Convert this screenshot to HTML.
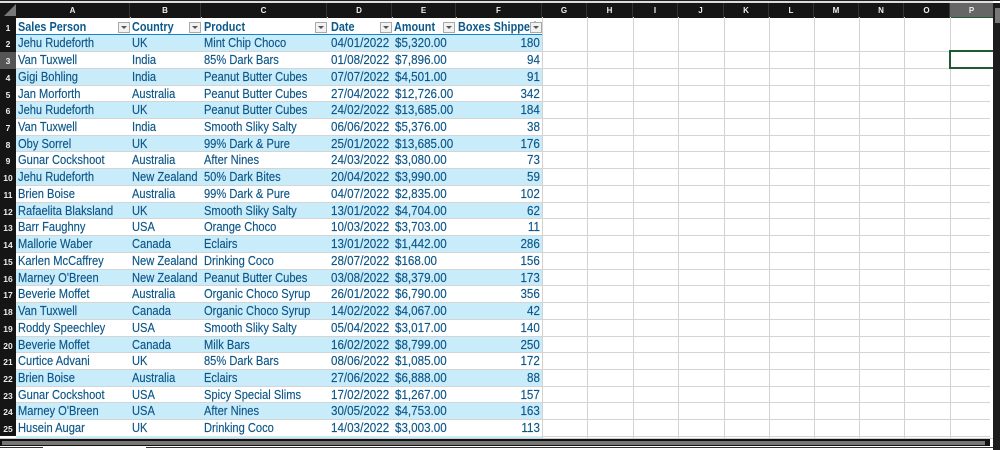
<!DOCTYPE html>
<html><head><meta charset="utf-8"><style>
html,body{margin:0;padding:0;background:#fff}
#p{position:relative;width:1000px;height:450px;overflow:hidden;background:#fff;font-family:"Liberation Sans",sans-serif}
.abs{position:absolute}
#top{left:0;top:0;width:1000px;height:1px;background:#222}
#top2{left:0;top:1px;width:993px;height:2px;background:#ddd}
#ch{left:0;top:3px;width:993px;height:14.5px;background:#151515}
.c{position:absolute;top:3px;height:14.5px;line-height:15px;color:#eee;font-size:8px;font-weight:bold;text-align:center;border-right:1px solid #333;box-sizing:border-box}
#rh{left:0;top:17px;width:16px;height:419px;background:#151515}
.n{height:16.74px;line-height:18px;text-align:center;color:#eee;font-size:8.5px;font-weight:bold}
.v{position:absolute;top:17px;width:1px;height:421px;background:#d2d2d2}
#g{left:16px;top:18.6px;width:974px}
.r{position:relative;height:16.74px;box-sizing:border-box;border-bottom:1px solid #d4d4d4}
.r span{position:absolute;top:0;line-height:16.5px;font-size:12.5px;color:#0c5688;white-space:nowrap;transform:scaleX(.89);transform-origin:0 50%;-webkit-text-stroke:.15px #0c5688}
.t{background:linear-gradient(#fff,#fff) 0 0/526px 100% no-repeat}
.b{background:linear-gradient(#c9ecfb,#c9ecfb) 0 0/526px 100% no-repeat}
.a{left:2px}.o{left:116px}.m{left:188px}
.r .d{left:315px;transform:scaleX(.93)}.r .e{left:379px;transform:scaleX(.93)}.r .f{right:450px;transform:scaleX(.93);transform-origin:100% 50%}
.h span{font-weight:bold;transform:scaleX(.87);color:#0b5a8c;-webkit-text-stroke:0}
.fb{position:absolute;top:22px;width:12px;height:11px;box-sizing:border-box;background:#f2f2f2;border:1px solid #a9a9a9}
.fb:after{content:"";position:absolute;left:2px;top:3px;border-left:3px solid transparent;border-right:3px solid transparent;border-top:3.5px solid #555}
</style></head><body><div id="p">
<div class="abs" id="top"></div><div class="abs" id="top2"></div><div class="abs" id="ch"></div>
<svg class="abs" style="left:3px;top:4px" width="13" height="13"><polygon points="13,0 13,12 1,12" fill="#777"/></svg>
<div class="c" style="left:16px;width:114px">A</div><div class="c" style="left:130px;width:71px">B</div><div class="c" style="left:201px;width:126px">C</div><div class="c" style="left:327px;width:65px">D</div><div class="c" style="left:392px;width:64px">E</div><div class="c" style="left:456px;width:86px">F</div><div class="c" style="left:542px;width:45px">G</div><div class="c" style="left:587px;width:46px">H</div><div class="c" style="left:633px;width:45px">I</div><div class="c" style="left:678px;width:46px">J</div><div class="c" style="left:724px;width:45px">K</div><div class="c" style="left:769px;width:45px">L</div><div class="c" style="left:814px;width:45px">M</div><div class="c" style="left:859px;width:45px">N</div><div class="c" style="left:904px;width:46px">O</div><div class="c" style="left:950px;width:43px;background:#666;border-bottom:1px solid #1d5c32;border-right:0">P</div>
<div class="abs" id="rh"><div class="n" style="margin-top:1.6px">1</div><div class="n">2</div><div class="n" style="background:#555">3</div><div class="n">4</div><div class="n">5</div><div class="n">6</div><div class="n">7</div><div class="n">8</div><div class="n">9</div><div class="n">10</div><div class="n">11</div><div class="n">12</div><div class="n">13</div><div class="n">14</div><div class="n">15</div><div class="n">16</div><div class="n">17</div><div class="n">18</div><div class="n">19</div><div class="n">20</div><div class="n">21</div><div class="n">22</div><div class="n">23</div><div class="n">24</div><div class="n">25</div></div>
<i class="v" style="left:130px"></i><i class="v" style="left:201px"></i><i class="v" style="left:327px"></i><i class="v" style="left:392px"></i><i class="v" style="left:456px"></i><i class="v" style="left:542px"></i><i class="v" style="left:587px"></i><i class="v" style="left:633px"></i><i class="v" style="left:678px"></i><i class="v" style="left:724px"></i><i class="v" style="left:769px"></i><i class="v" style="left:814px"></i><i class="v" style="left:859px"></i><i class="v" style="left:904px"></i><i class="v" style="left:950px"></i>
<div class="abs" id="g">
<div class="r h t" style="border-bottom:0;background-size:526px 100%"><span class="a">Sales Person</span><span class="o">Country</span><span class="m">Product</span><span style="left:315px">Date</span><span style="left:378px">Amount</span><span style="left:442px">Boxes Shipped</span></div>
<div class="r b"><span class="a">Jehu Rudeforth</span><span class="o">UK</span><span class="m">Mint Chip Choco</span><span class="d">04/01/2022</span><span class="e">$5,320.00</span><span class="f">180</span></div>
<div class="r t"><span class="a">Van Tuxwell</span><span class="o">India</span><span class="m">85% Dark Bars</span><span class="d">01/08/2022</span><span class="e">$7,896.00</span><span class="f">94</span></div>
<div class="r b"><span class="a">Gigi Bohling</span><span class="o">India</span><span class="m">Peanut Butter Cubes</span><span class="d">07/07/2022</span><span class="e">$4,501.00</span><span class="f">91</span></div>
<div class="r t"><span class="a">Jan Morforth</span><span class="o">Australia</span><span class="m">Peanut Butter Cubes</span><span class="d">27/04/2022</span><span class="e">$12,726.00</span><span class="f">342</span></div>
<div class="r b"><span class="a">Jehu Rudeforth</span><span class="o">UK</span><span class="m">Peanut Butter Cubes</span><span class="d">24/02/2022</span><span class="e">$13,685.00</span><span class="f">184</span></div>
<div class="r t"><span class="a">Van Tuxwell</span><span class="o">India</span><span class="m">Smooth Sliky Salty</span><span class="d">06/06/2022</span><span class="e">$5,376.00</span><span class="f">38</span></div>
<div class="r b"><span class="a">Oby Sorrel</span><span class="o">UK</span><span class="m">99% Dark &amp; Pure</span><span class="d">25/01/2022</span><span class="e">$13,685.00</span><span class="f">176</span></div>
<div class="r t"><span class="a">Gunar Cockshoot</span><span class="o">Australia</span><span class="m">After Nines</span><span class="d">24/03/2022</span><span class="e">$3,080.00</span><span class="f">73</span></div>
<div class="r b"><span class="a">Jehu Rudeforth</span><span class="o">New Zealand</span><span class="m">50% Dark Bites</span><span class="d">20/04/2022</span><span class="e">$3,990.00</span><span class="f">59</span></div>
<div class="r t"><span class="a">Brien Boise</span><span class="o">Australia</span><span class="m">99% Dark &amp; Pure</span><span class="d">04/07/2022</span><span class="e">$2,835.00</span><span class="f">102</span></div>
<div class="r b"><span class="a">Rafaelita Blaksland</span><span class="o">UK</span><span class="m">Smooth Sliky Salty</span><span class="d">13/01/2022</span><span class="e">$4,704.00</span><span class="f">62</span></div>
<div class="r t"><span class="a">Barr Faughny</span><span class="o">USA</span><span class="m">Orange Choco</span><span class="d">10/03/2022</span><span class="e">$3,703.00</span><span class="f">11</span></div>
<div class="r b"><span class="a">Mallorie Waber</span><span class="o">Canada</span><span class="m">Eclairs</span><span class="d">13/01/2022</span><span class="e">$1,442.00</span><span class="f">286</span></div>
<div class="r t"><span class="a">Karlen McCaffrey</span><span class="o">New Zealand</span><span class="m">Drinking Coco</span><span class="d">28/07/2022</span><span class="e">$168.00</span><span class="f">156</span></div>
<div class="r b"><span class="a">Marney O'Breen</span><span class="o">New Zealand</span><span class="m">Peanut Butter Cubes</span><span class="d">03/08/2022</span><span class="e">$8,379.00</span><span class="f">173</span></div>
<div class="r t"><span class="a">Beverie Moffet</span><span class="o">Australia</span><span class="m">Organic Choco Syrup</span><span class="d">26/01/2022</span><span class="e">$6,790.00</span><span class="f">356</span></div>
<div class="r b"><span class="a">Van Tuxwell</span><span class="o">Canada</span><span class="m">Organic Choco Syrup</span><span class="d">14/02/2022</span><span class="e">$4,067.00</span><span class="f">42</span></div>
<div class="r t"><span class="a">Roddy Speechley</span><span class="o">USA</span><span class="m">Smooth Sliky Salty</span><span class="d">05/04/2022</span><span class="e">$3,017.00</span><span class="f">140</span></div>
<div class="r b"><span class="a">Beverie Moffet</span><span class="o">Canada</span><span class="m">Milk Bars</span><span class="d">16/02/2022</span><span class="e">$8,799.00</span><span class="f">250</span></div>
<div class="r t"><span class="a">Curtice Advani</span><span class="o">UK</span><span class="m">85% Dark Bars</span><span class="d">08/06/2022</span><span class="e">$1,085.00</span><span class="f">172</span></div>
<div class="r b"><span class="a">Brien Boise</span><span class="o">Australia</span><span class="m">Eclairs</span><span class="d">27/06/2022</span><span class="e">$6,888.00</span><span class="f">88</span></div>
<div class="r t"><span class="a">Gunar Cockshoot</span><span class="o">USA</span><span class="m">Spicy Special Slims</span><span class="d">17/02/2022</span><span class="e">$1,267.00</span><span class="f">157</span></div>
<div class="r b"><span class="a">Marney O'Breen</span><span class="o">USA</span><span class="m">After Nines</span><span class="d">30/05/2022</span><span class="e">$4,753.00</span><span class="f">163</span></div>
<div class="r t"><span class="a">Husein Augar</span><span class="o">UK</span><span class="m">Drinking Coco</span><span class="d">14/03/2022</span><span class="e">$3,003.00</span><span class="f">113</span></div>
</div>
<div class="abs" style="left:16px;top:34px;width:526px;height:1px;background:#1485c8"></div>
<div class="abs" style="left:16px;top:436px;width:526px;height:2px;background:#c9ecfb"></div>
<div class="fb" style="left:118px"></div><div class="fb" style="left:189px"></div><div class="fb" style="left:315px"></div><div class="fb" style="left:380px"></div><div class="fb" style="left:443px"></div><div class="fb" style="left:530px"></div>
<div class="abs" style="left:949px;top:50px;width:44px;height:19px;box-sizing:border-box;border:2px solid #1d5c32;border-right:0"></div>
<div class="abs" style="left:0;top:438px;width:993px;height:1px;background:#ccc"></div>
<div class="abs" style="left:0;top:439px;width:990px;height:7px;background:#111"></div>
<div class="abs" style="left:2px;top:441px;width:983px;height:4px;background:#777"></div>
<div class="abs" style="left:0;top:447px;width:43px;height:1px;background:#333"></div>
<div class="abs" style="left:146px;top:447px;width:847px;height:1px;background:#333"></div>
<div class="abs" style="left:993px;top:3px;width:7px;height:447px;background:#1c1c1c"></div>
<div class="abs" style="left:995px;top:8px;width:5px;height:15px;background:#777"></div>
</div></body></html>
